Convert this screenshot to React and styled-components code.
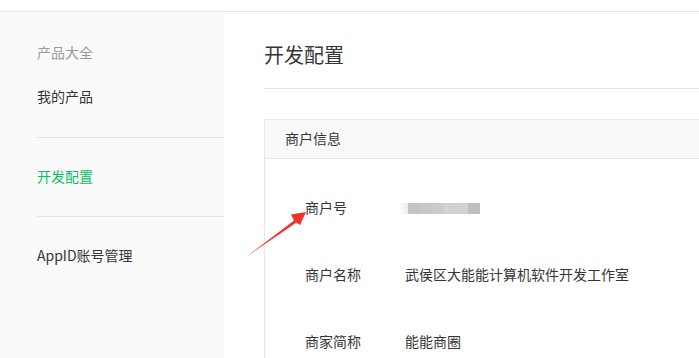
import styled, { createGlobalStyle } from 'styled-components';

const GlobalStyle = createGlobalStyle`
  body {
    margin: 0;
    font-family: "Noto Sans CJK SC", "Noto Sans", sans-serif;
    color: #353535;
    background: #fff;
  }
`;

const maskColors = ['#c4c4c4', '#c8c6c6', '#cbcbcb', '#d0d3d3', '#d4d2d1', '#bdbfc2'];

function App() {
  return (
    <Page>
      <GlobalStyle />
      <TopBar />
      <Body>
        <Sidebar>
          <Group $first>
            <NavItem $muted>产品大全</NavItem>
            <NavItem>我的产品</NavItem>
          </Group>
          <Group>
            <NavItem $active>开发配置</NavItem>
          </Group>
          <Group $last>
            <NavItem>AppID账号管理</NavItem>
          </Group>
        </Sidebar>
        <Main>
          <Content>
            <Title>开发配置</Title>
            <Panel>
              <PanelHead>商户信息</PanelHead>
              <Rows>
                <Row>
                  <Label>商户号</Label>
                  <Masked>
                    {maskColors.map((c) => (
                      <MaskBlock key={c} $color={c} />
                    ))}
                  </Masked>
                </Row>
                <Row>
                  <Label>商户名称</Label>
                  <Value>武侯区大能能计算机软件开发工作室</Value>
                </Row>
                <Row>
                  <Label>商家简称</Label>
                  <Value>能能商圈</Value>
                </Row>
              </Rows>
            </Panel>
          </Content>
        </Main>
      </Body>
      <Arrow viewBox="0 0 699 358">
        <polygon points="246,257 294,220.5 291,214.5 306,212 300,225 296.5,222.5" fill="#f4312a" />
      </Arrow>
    </Page>
  );
}

export default App;

const Page = styled.div`
  position: relative;
  width: 699px;
  height: 358px;
  overflow: hidden;
`;

const TopBar = styled.div`
  height: 11px;
  border-bottom: 1px solid #e6e6ea;
`;

const Body = styled.div`
  display: flex;
  height: 346px;
`;

const Sidebar = styled.nav`
  width: 224px;
  flex-shrink: 0;
  padding-left: 37px;
  box-sizing: border-box;
  background: #fafafa;
`;

const Group = styled.div`
  padding: ${(p) => (p.$first ? '19px 0 18px' : '17px 0')};
  border-bottom: ${(p) => (p.$last ? 'none' : '1px solid #e3e3e5')};
`;

const NavItem = styled.div`
  height: 44px;
  line-height: 42px;
  font-size: 14px;
  color: ${(p) => (p.$active ? '#07c160' : p.$muted ? '#9a9a9a' : '#353535')};
`;

const Main = styled.main`
  flex: 1;
  padding-left: 40px;
  overflow: hidden;
`;

const Content = styled.div`
  width: 560px;
`;

const Title = styled.h2`
  margin: 0;
  padding: 27px 0 17px;
  font-size: 20px;
  font-weight: 400;
  line-height: 32px;
  color: #353535;
  border-bottom: 1px solid #e3e3e5;
`;

const Panel = styled.section`
  margin-top: 30px;
  border: 1px solid #e7e7eb;
  height: 300px;
`;

const PanelHead = styled.div`
  height: 38px;
  line-height: 36px;
  padding-left: 20px;
  font-size: 14px;
  background: #f9f9f9;
  border-bottom: 1px solid #e7e7eb;
`;

const Rows = styled.div`
  padding-top: 14px;
`;

const Row = styled.div`
  display: flex;
  align-items: center;
  height: 67px;
  padding-left: 40px;
  font-size: 14px;
`;

const Label = styled.span`
  width: 100px;
  color: #353535;
`;

const Value = styled.span`
  color: #353535;
`;

const Masked = styled.span`
  display: flex;
  margin-left: -7px;
  margin-top: 4px;
  &::before {
    content: '';
    width: 10px;
    height: 11px;
    background: linear-gradient(90deg, #ffffff, #ececec);
  }
`;

const MaskBlock = styled.span`
  width: 12px;
  height: 11px;
  background: ${(p) => p.$color};
`;

const Arrow = styled.svg`
  position: absolute;
  left: 0;
  top: 0;
  width: 699px;
  height: 358px;
  pointer-events: none;
`;
